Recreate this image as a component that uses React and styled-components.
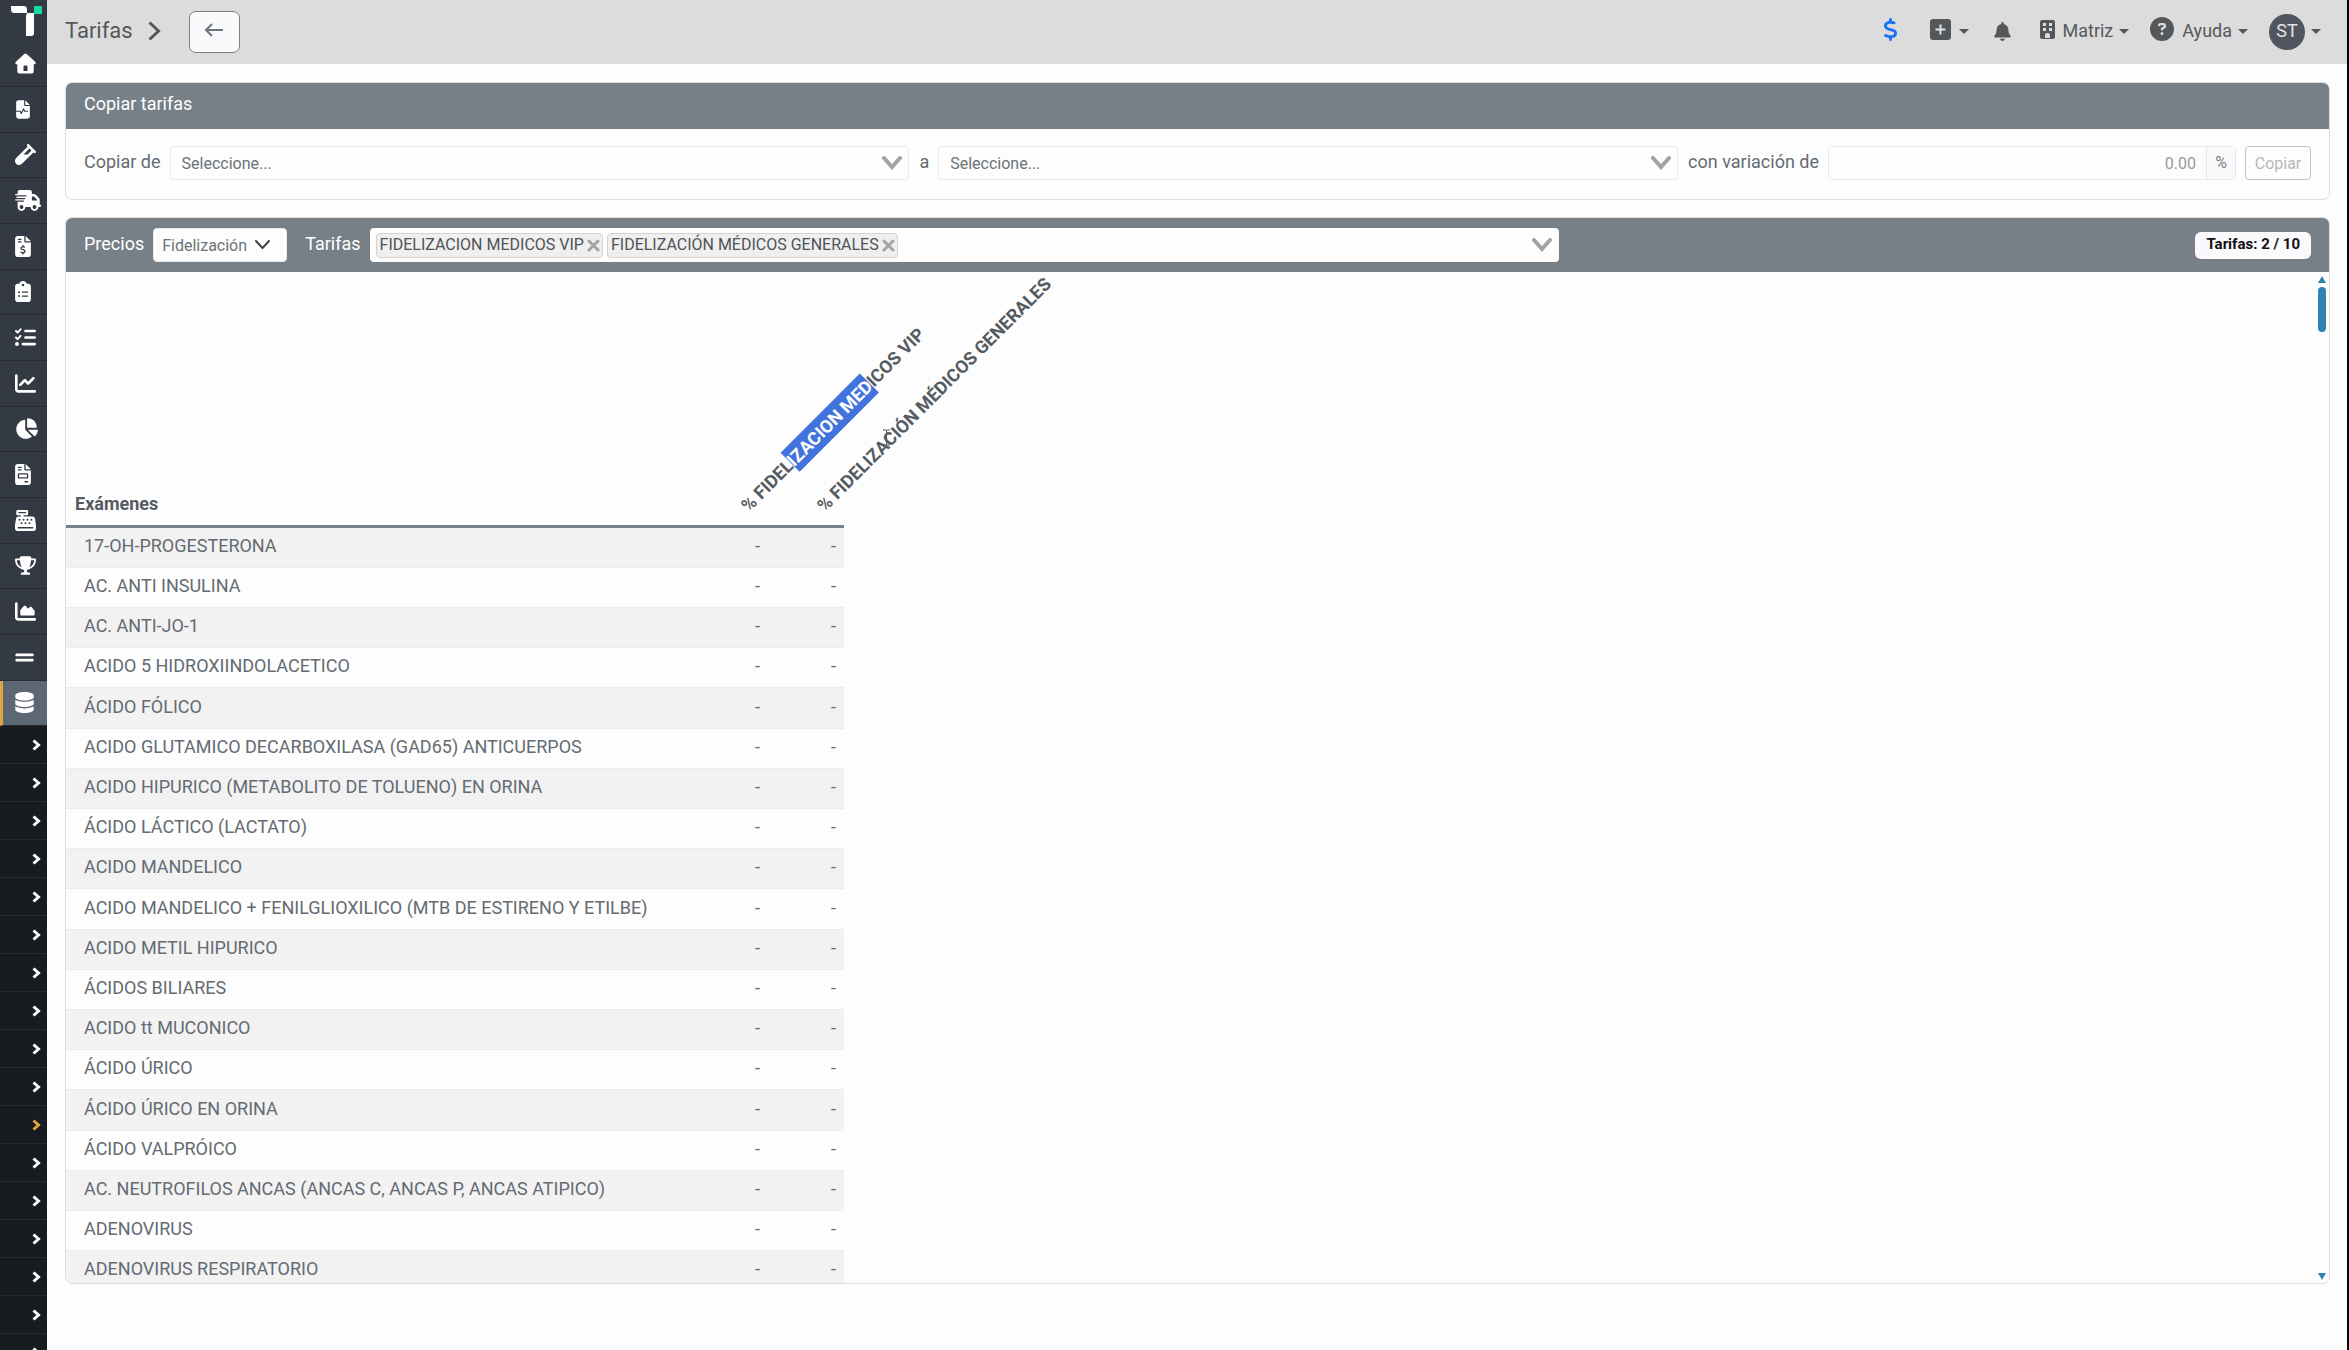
import React from "react";
import styled, { createGlobalStyle, css } from "styled-components";
import {
  FaFileWaveform, FaVial, FaTruckFast, FaFileInvoiceDollar, FaClipboardList,
  FaListCheck, FaChartLine, FaChartPie, FaFileInvoice, FaCashRegister, FaTrophy,
  FaChartArea, FaGripLines, FaDatabase, FaDollarSign, FaBell,
  FaCircleQuestion,
} from "react-icons/fa6";

const Global = createGlobalStyle`
  *, *::before, *::after { box-sizing: border-box; }
  body {
    margin: 0;
    background: #fdfdfd;
    color: #646b72;
    font-family: Roboto, "Liberation Sans", sans-serif;
    font-size: 18px;
    line-height: 24px;
    overflow: hidden;
  }
  button, input, select { font-family: inherit; margin: 0; }
`;

const Shell = styled.div`
  display: grid;
  grid-template-columns: 47px minmax(0, 1fr);
  height: 100vh;
  border-right: 2px solid #000;
`;

const Sidebar = styled.nav`
  background: #343a44;
  overflow: hidden;
  display: flex;
  flex-direction: column;
`;

const Brand = styled.a`
  flex: none;
  height: 41px;
  padding: 5px 5px 0 10px;
  svg { display: block; }
`;

const List = styled.ul`
  flex: none;
  list-style: none;
  margin: 0;
  padding: 0;
`;

const MenuItem = styled.li`
  height: 46px;
  &:nth-child(3n) { height: 45px; }
`;

const MenuLink = styled.a`
  display: flex;
  align-items: center;
  height: 100%;
  padding: 0 0 1px 15px;
  color: #fff;
  border-bottom: 1px solid #272c34;
  svg { flex: none; width: ${(p) => p.$icon}px; height: 21px; }
  ${(p) => p.$active && css`
    background: #5b6773;
    padding-left: 12px;
    border-left: 3px solid #dfa63f;
  `}
`;

const SubLink = styled.a`
  display: flex;
  align-items: center;
  justify-content: flex-end;
  height: 38px;
  padding-right: 6px;
  background: #181c20;
  border-bottom: 1px solid #272c32;
  color: ${(p) => (p.$current ? "#dfa63f" : "#fff")};
`;

const Page = styled.div`
  display: flex;
  flex-direction: column;
  min-height: 0;
`;

const TopBar = styled.header`
  flex: none;
  display: flex;
  align-items: center;
  height: 64px;
  padding: 0 26px 0 18px;
  background: #dcdcdc;
  color: #55585b;
`;

const Crumb = styled.div`
  display: flex;
  align-items: center;
  gap: 15px;
  padding-bottom: 3px;
`;

const Title = styled.h1`
  margin: 0;
  font-size: 22px;
  font-weight: 400;
`;

const BackButton = styled.button`
  display: flex;
  align-items: center;
  justify-content: center;
  width: 51px;
  height: 42px;
  margin-left: 28px;
  padding: 0 0 4px;
  border: 1px solid #7c8084;
  border-radius: 7px;
  background: #fafafd;
  color: #6d757c;
`;

const Tools = styled.div`
  display: flex;
  align-items: center;
  margin-left: auto;
`;

const Tool = styled.button`
  display: flex;
  align-items: center;
  gap: 6px;
  margin-left: 21px;
  padding: 0 ${(p) => p.$tail || 0}px 2px 0;
  border: 0;
  background: none;
  color: #55585b;
  font-size: 18px;
  line-height: 24px;
  svg {
    flex: none;
    width: ${(p) => p.$icon}px;
    margin-right: 2px;
    margin-bottom: ${(p) => (p.$low ? 0 : 4)}px;
  }
`;

const Caret = styled.span`
  border: 5px solid transparent;
  border-top-color: currentColor;
  border-bottom: 0;
`;

const Avatar = styled.span`
  width: 36px;
  height: 36px;
  margin-top: 2px;
  border-radius: 50%;
  background: #50565f;
  color: #e4e4e4;
  line-height: 34px;
  text-align: center;
`;

const Main = styled.main`
  flex: 1;
  min-height: 0;
  display: flex;
  flex-direction: column;
  gap: 17px;
  padding: 18px 17px 66px 18px;
`;

const Card = styled.section`
  display: flex;
  flex-direction: column;
  min-height: 0;
  border: 1px solid #dcdee0;
  border-radius: 7px;
  overflow: hidden;
  ${(p) => p.$fill && css`flex: 1;`}
`;

const CardHead = styled.div`
  flex: none;
  display: flex;
  align-items: center;
  height: ${(p) => p.$height}px;
  padding: 0 18px;
  background: #777f87;
  color: #fff;
`;

const CardTitle = styled.h2`
  margin: 0;
  padding-bottom: 4px;
  font-size: 18px;
  font-weight: 400;
`;

const CopyForm = styled.form`
  display: flex;
  align-items: center;
  height: 70px;
  padding: 0 18px 2px;
`;

const Label = styled.label`
  flex: none;
  margin: 0 9px 0 ${(p) => p.$before || 0}px;
  padding-bottom: 3px;
`;

const SelectBox = styled.span`
  flex: ${(p) => (p.$width ? "none" : "1")};
  width: ${(p) => (p.$width ? p.$width + "px" : "auto")};
  display: grid;
  align-items: center;
  > * { grid-area: 1 / 1; }
  > svg { justify-self: end; margin-right: ${(p) => p.$inset || 7}px; pointer-events: none; }
`;

const Select = styled.select`
  width: 100%;
  height: 34px;
  padding: 0 ${(p) => p.$pad || 11}px;
  appearance: none;
  border: 1px solid #e8e9ee;
  border-radius: 4px;
  background: #fdfdfd;
  color: #6c7279;
  font-size: 16px;
`;

const InputGroup = styled.span`
  flex: none;
  display: flex;
  width: 408px;
  height: 34px;
  border: 1px solid #e6e7ea;
  border-radius: 4px;
  overflow: hidden;
`;

const AmountInput = styled.input`
  flex: 1;
  min-width: 0;
  padding: 0 10px;
  border: 0;
  background: #fdfdfd;
  font-size: 16px;
  text-align: right;
  &::placeholder { color: #94999e; opacity: 1; }
`;

const Unit = styled.span`
  width: 29px;
  border-left: 1px solid #e6e7ea;
  background: #f9f9fc;
  color: #7b8187;
  font-size: 16px;
  line-height: 32px;
  text-align: center;
`;

const CopyButton = styled.button`
  flex: none;
  width: 66px;
  height: 34px;
  margin-left: 9px;
  padding: 0;
  border: 1px solid #bfc2c5;
  border-radius: 4px;
  background: #fdfdfd;
  color: #b6b9bc;
  font-size: 16px;
`;

const TagBox = styled.div`
  display: flex;
  align-items: center;
  gap: 4px;
  width: 1189px;
  height: 34px;
  padding: 0 7px 0 6px;
  border-radius: 4px;
  background: #fdfdfd;
  > svg { margin-left: auto; }
`;

const Tag = styled.span`
  display: flex;
  align-items: center;
  gap: 3px;
  height: 25px;
  padding: 0 2px 1px 3px;
  border: 1px solid #d3d3d3;
  border-radius: 4px;
  background: #efefef;
  color: #4f5357;
  font-size: 16px;
`;

const TagRemove = styled.button`
  display: flex;
  padding: 2px 0 0;
  border: 0;
  background: none;
  color: #a3a5a4;
`;

const Badge = styled.span`
  margin-left: auto;
  height: 27px;
  padding: 0 11px;
  border-radius: 6px;
  background: #fafafd;
  color: #111;
  font-size: 15px;
  font-weight: 700;
  line-height: 25px;
`;

const Viewport = styled.div`
  flex: 1;
  min-height: 0;
  display: flex;
  justify-content: space-between;
  overflow: hidden;
`;

const Table = styled.table`
  align-self: flex-start;
  width: 778px;
  table-layout: fixed;
  border-collapse: separate;
  border-spacing: 0;
`;

const HeadCell = styled.th`
  height: 256px;
  width: ${(p) => (p.$narrow ? "76px" : "auto")};
  padding: 0 9px 9px;
  border-bottom: 3px solid #777f87;
  color: #555b61;
  font-weight: 700;
  text-align: left;
  vertical-align: bottom;
`;

const Slanted = styled.div`
  width: 0;
  height: 24px;
  margin-left: 61px;
  white-space: nowrap;
  transform: rotate(-45deg);
  transform-origin: 0 100%;
  mark { background: #4272db; color: #fff; padding: 3px 0; }
`;

const HeadSlot = styled(HeadCell)`
  padding: 0 0 8px;
`;

const Row = styled.tr`
  height: 40px;
  &:nth-child(5n) { height: 41px; }
  &:nth-child(odd) { background: #f2f2f2; }
`;

const Cell = styled.td`
  padding: 0 8px 3px ${(p) => (p.$value ? 8 : 18)}px;
  border-bottom: 1px solid #ebecec;
  text-align: ${(p) => (p.$value ? "right" : "left")};
  white-space: nowrap;
`;

const ScrollBar = styled.div`
  display: flex;
  flex-direction: column;
  justify-content: space-between;
  width: 8px;
  margin: 4px 3px 3px 0;
`;

const ScrollTop = styled.div`
  display: flex;
  flex-direction: column;
  gap: 4px;
`;

const Thumb = styled.div`
  height: 45px;
  border-radius: 4px;
  background: #3083b0;
`;

const ScrollArrow = styled.span`
  width: 8px;
  height: 7px;
  background: #3083b0;
  clip-path: ${(p) => (p.$down ? "polygon(0 0, 100% 0, 50% 100%)" : "polygon(50% 0, 100% 100%, 0 100%)")};
`;

const Pointer = styled.svg`
  position: absolute;
  left: 882px;
  top: 429px;
  pointer-events: none;
`;

const Chevron = ({ w = 20, h = 14, t = 4, c = "#a1a4a4" }) => (
  <svg width={w} height={h} viewBox={`0 0 ${w} ${h}`} fill="none" aria-hidden="true">
    <path d={`M${t / 2} ${t / 2} L${w / 2} ${h - t / 2 - 1} L${w - t / 2} ${t / 2}`} stroke={c} strokeWidth={t} strokeLinecap="round" />
  </svg>
);

const Arrow = ({ w = 9, h = 12, t = 3 }) => (
  <svg width={w} height={h} viewBox={`0 0 ${w} ${h}`} fill="none" aria-hidden="true">
    <path d={`M${t / 2} ${t / 2} L${w - t / 2 - 1} ${h / 2} L${t / 2} ${h - t / 2}`} stroke="currentColor" strokeWidth={t} />
  </svg>
);

const Cross = () => (
  <svg width="13" height="13" viewBox="0 0 13 13" aria-hidden="true">
    <path d="M2 2 L11 11 M11 2 L2 11" stroke="currentColor" strokeWidth="3" strokeLinecap="round" />
  </svg>
);

const House = () => (
  <svg width="21" height="20" viewBox="0 0 21 20" aria-hidden="true">
    <path
      fill="currentColor"
      fillRule="evenodd"
      d="M9.300 0.600 Q10.500 -0.400 11.700 0.600 L20.400 8.600 Q21.200 10.600 19.500 10.800 H18.700 V18 Q18.700 20 16.700 20 H4.300 Q2.300 20 2.300 18 V10.800 H1.500 Q-0.200 10.600 0.600 8.600 Z M8.500 13 V17.500 H12.500 V13 Q12.500 12 11.500 12 H9.500 Q8.500 12 8.500 13 Z"
    />
  </svg>
);

const Building = () => (
  <svg height="19" viewBox="0 0 15 19" aria-hidden="true">
    <path
      fill="currentColor"
      fillRule="evenodd"
      d="M2 0 H13 Q15 0 15 2 V17 Q15 19 13 19 H2 Q0 19 0 17 V2 Q0 0 2 0 Z M3 3 V6 H6 V3 Z M9 3 V6 H12 V3 Z M3 8 V11 H6 V8 Z M9 8 V11 H12 V8 Z M5 18 H10 V15 Q10 13 7.500 13 Q5 13 5 15 Z"
    />
  </svg>
);

const PlusBox = () => (
  <svg height="21" viewBox="0 0 21 21" aria-hidden="true">
    <rect width="21" height="21" rx="3" fill="currentColor" />
    <path d="M10.500 5.500 V15.500 M5.500 10.500 H15.500" stroke="#e2e2e2" strokeWidth="2" />
  </svg>
);

const MENU = [
  ["Inicio", House, 21], ["Resultados", FaFileWaveform, 16], ["Muestras", FaVial, 21],
  ["Envíos", FaTruckFast, 26], ["Facturas", FaFileInvoiceDollar, 16], ["Órdenes", FaClipboardList, 16],
  ["Tareas", FaListCheck, 21], ["Tendencias", FaChartLine, 21], ["Reportes", FaChartPie, 23],
  ["Documentos", FaFileInvoice, 16], ["Caja", FaCashRegister, 21], ["Logros", FaTrophy, 21],
  ["Control", FaChartArea, 21], ["Otros", FaGripLines, 19], ["Datos", FaDatabase, 19],
];

const EXAMS = [
  "17-OH-PROGESTERONA", "AC. ANTI INSULINA", "AC. ANTI-JO-1", "ACIDO 5 HIDROXIINDOLACETICO",
  "ÁCIDO FÓLICO", "ACIDO GLUTAMICO DECARBOXILASA (GAD65) ANTICUERPOS",
  "ACIDO HIPURICO (METABOLITO DE TOLUENO) EN ORINA", "ÁCIDO LÁCTICO (LACTATO)", "ACIDO MANDELICO",
  "ACIDO MANDELICO + FENILGLIOXILICO (MTB DE ESTIRENO Y ETILBE)", "ACIDO METIL HIPURICO",
  "ÁCIDOS BILIARES", "ACIDO tt MUCONICO", "ÁCIDO ÚRICO", "ÁCIDO ÚRICO EN ORINA", "ÁCIDO VALPRÓICO",
  "AC. NEUTROFILOS ANCAS (ANCAS C, ANCAS P, ANCAS ATIPICO)", "ADENOVIRUS", "ADENOVIRUS RESPIRATORIO",
];

const TAGS = ["FIDELIZACION MEDICOS VIP", "FIDELIZACIÓN MÉDICOS GENERALES"];

export default function App() {
  return (
    <>
      <Global />
      <Shell>
        <Sidebar>
          <Brand href="#" aria-label="Inicio">
            <svg width="32" height="32" viewBox="0 0 32 32" aria-hidden="true">
              <path d="M1 1 H14 Q17 1 17 5 V8 H4 Q1 8 1 4 Z" fill="#fff" />
              <path d="M17 8 H24 V28 Q24 31 21 31 H16 V11 Z" fill="#fff" />
              <rect x="24" y="1" width="8" height="8" fill="#14dba5" />
            </svg>
          </Brand>
          <List>
            {MENU.map(([name, Icon, width]) => (
              <MenuItem key={name}>
                <MenuLink href="#" aria-label={name} $icon={width} $active={name === "Datos"}><Icon /></MenuLink>
              </MenuItem>
            ))}
          </List>
          <List>
            {Array.from({ length: 17 }, (_, i) => (
              <li key={i}>
                <SubLink href="#" aria-label={`Datos ${i + 1}`} $current={i === 10}><Arrow /></SubLink>
              </li>
            ))}
          </List>
        </Sidebar>
        <Page>
          <TopBar>
            <Crumb>
              <Title>Tarifas</Title>
              <Arrow w={13} h={20} t={3} />
            </Crumb>
            <BackButton type="button" aria-label="Volver">
              <svg width="20" height="16" viewBox="0 0 20 16" fill="none" aria-hidden="true">
                <path d="M8 2 L2 8 L8 14 M2 8 H19" stroke="currentColor" strokeWidth="2" />
              </svg>
            </BackButton>
            <Tools>
              <Tool type="button" aria-label="Precios" $icon={15} $tail={9}><FaDollarSign size={23} color="#1a73f5" /></Tool>
              <Tool type="button" aria-label="Nuevo" $icon={21} $tail={4}><PlusBox /><Caret /></Tool>
              <Tool type="button" aria-label="Avisos" $icon={17} $tail={6} $low><FaBell size={19} /></Tool>
              <Tool type="button" $icon={15}><Building />Matriz<Caret /></Tool>
              <Tool type="button" $icon={24}><FaCircleQuestion size={24} />Ayuda<Caret /></Tool>
              <Tool type="button"><Avatar>ST</Avatar><Caret /></Tool>
            </Tools>
          </TopBar>
          <Main>
            <Card>
              <CardHead $height={46}><CardTitle>Copiar tarifas</CardTitle></CardHead>
              <CopyForm>
                <Label htmlFor="from">Copiar de</Label>
                <SelectBox>
                  <Select id="from"><option>Seleccione...</option></Select>
                  <Chevron />
                </SelectBox>
                <Label htmlFor="to" $before={10}>a</Label>
                <SelectBox>
                  <Select id="to"><option>Seleccione...</option></Select>
                  <Chevron />
                </SelectBox>
                <Label htmlFor="change" $before={10}>con variación de</Label>
                <InputGroup>
                  <AmountInput id="change" placeholder="0.00" />
                  <Unit>%</Unit>
                </InputGroup>
                <CopyButton type="button" disabled>Copiar</CopyButton>
              </CopyForm>
            </Card>
            <Card $fill>
              <CardHead $height={54}>
                <Label htmlFor="prices">Precios</Label>
                <SelectBox $width={134} $inset={17}>
                  <Select id="prices" $pad={8}><option>Fidelización</option></Select>
                  <Chevron w={15} h={10} t={2} c="#444" />
                </SelectBox>
                <Label as="span" $before={18}>Tarifas</Label>
                <TagBox>
                  {TAGS.map((t) => (
                    <Tag key={t}>{t}<TagRemove type="button" aria-label={`Quitar ${t}`}><Cross /></TagRemove></Tag>
                  ))}
                  <Chevron />
                </TagBox>
                <Badge>Tarifas: 2 / 10</Badge>
              </CardHead>
              <Viewport>
                <Table>
                  <thead>
                    <tr>
                      <HeadCell>Exámenes</HeadCell>
                      <HeadSlot $narrow><Slanted>% FIDEL<mark>IZACION MED</mark>ICOS VIP</Slanted></HeadSlot>
                      <HeadSlot $narrow><Slanted>% FIDELIZACIÓN MÉDICOS GENERALES</Slanted></HeadSlot>
                    </tr>
                  </thead>
                  <tbody>
                    {EXAMS.map((e) => (
                      <Row key={e}><Cell>{e}</Cell><Cell $value>-</Cell><Cell $value>-</Cell></Row>
                    ))}
                  </tbody>
                </Table>
                <ScrollBar>
                  <ScrollTop><ScrollArrow /><Thumb /></ScrollTop>
                  <ScrollArrow $down />
                </ScrollBar>
              </Viewport>
            </Card>
          </Main>
        </Page>
      </Shell>
      <Pointer width="9" height="17" viewBox="0 0 9 17" fill="none" aria-hidden="true">
        <path d="M1 1 H4 M5 1 H8 M4.500 1 V16 M1 16 H4 M5 16 H8" stroke="#555" />
      </Pointer>
    </>
  );
}
